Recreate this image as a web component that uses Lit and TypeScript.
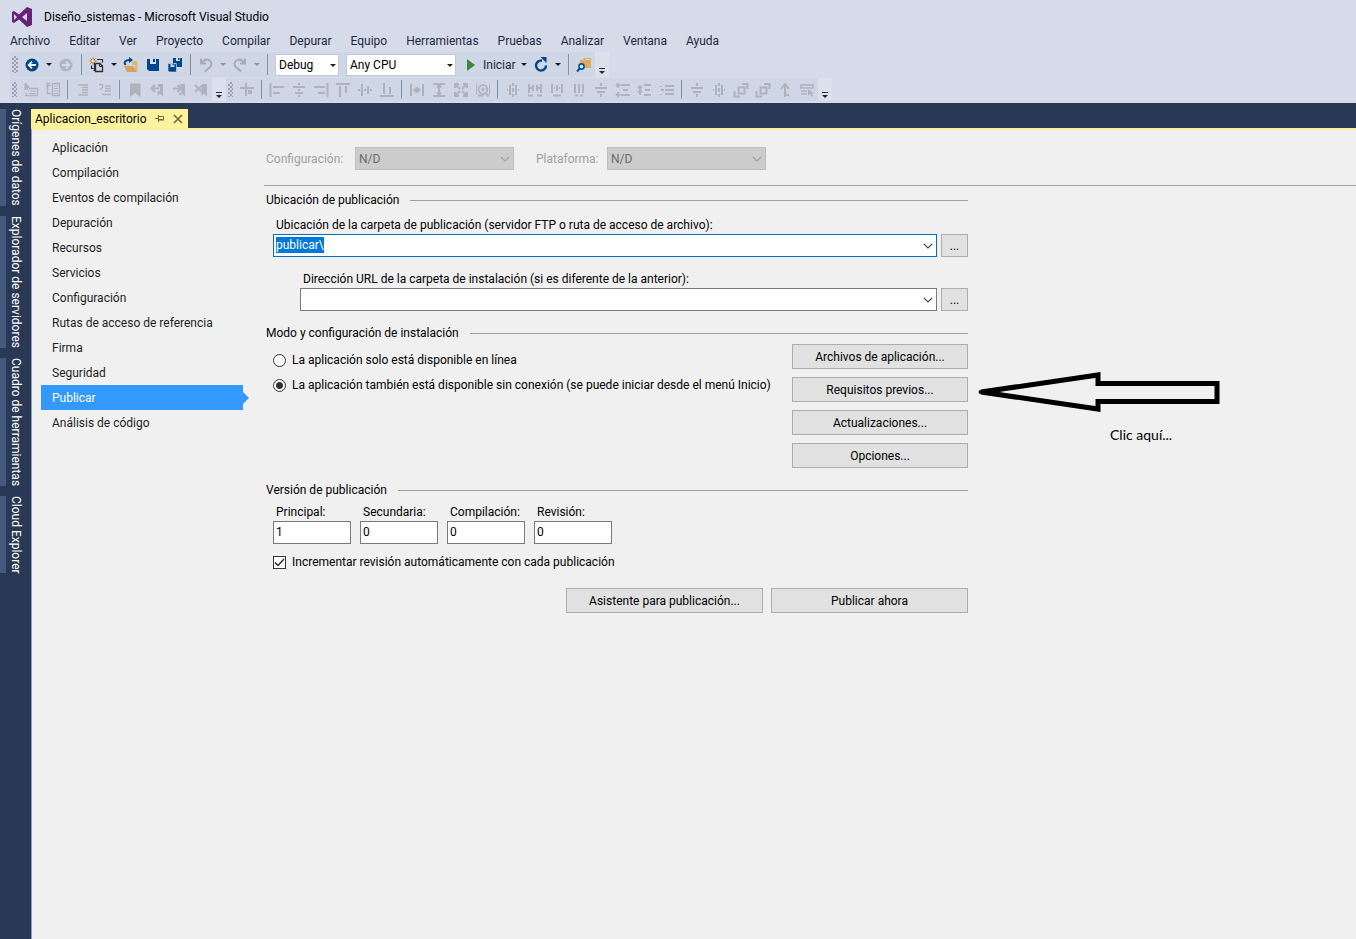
import { LitElement, html, css, svg, nothing } from "lit";
import { customElement, property, query } from "lit/decorators.js";
import { classMap } from "lit/directives/class-map.js";

const G = "#aeb2bc";

const align = (d: string) => svg`<path d=${d} fill="none" stroke=${G} stroke-width="2"/>`;

const glyphs: Record<string, unknown> = {
  back: svg`<circle cx="8" cy="8" r="6.5" fill="#00468b"/><path d="M12 8H5M8 4.6 4.8 8 8 11.400" fill="none" stroke="#fff" stroke-width="1.8"/>`,
  forward: svg`<circle cx="8" cy="8" r="6.500" fill="#b1b5bf"/><path d="M4 8h7M8 4.600 11.200 8 8 11.400" fill="none" stroke="#d6dbe9" stroke-width="1.800"/>`,
  newItem: svg`<path d="M8 2.500h5.500v3M2.500 8.500v3h2M4.500 13.500h2M5.500 13V6.500h3" fill="none" stroke="#2d2d30" stroke-width="1.200"/><path d="M6.500 6.500h4.500l2.500 2.500v5.500h-7z" fill="#cfd6e5" stroke="#2d2d30" stroke-width="1.300"/><path d="M10.500 6.500V9.500h3" fill="none" stroke="#2d2d30"/><path d="M4 .5v7M.5 4h7M1.500 1.500l5 5M6.500 1.500l-5 5" stroke="#b8762c" stroke-width="1"/><circle cx="4" cy="4" r="1.100" fill="#fff"/>`,
  open: svg`<path d="M9 4h5.500v11H12V8H9z" fill="#dcb67a"/><path d="M1 9h9.500l3 6H4z" fill="#d7a557"/><path d="M2.500 8c-2-3 0-5 4-5" fill="none" stroke="#00468b" stroke-width="2"/><path d="M6 0l4 3-4 3z" fill="#00468b"/>`,
  save: svg`<path d="M2 2h12v12H4l-2-2z" fill="#00468b"/><path d="M5 2h6v5H5z" fill="#d6dbe9"/><path d="M8 2h2v3H8z" fill="#00468b"/><path d="M5 11h5v3H5z" fill="#00468b"/>`,
  saveAll: svg`<path d="M6 1h9v9H9V6H6z" fill="#00468b"/><path d="M9 1h4v3H9z" fill="#d6dbe9"/><path d="M11 1h1.500v2H11z" fill="#00468b"/><path d="M1 6.500h8.500V15H2.500L1 13.500z" fill="#00468b" stroke="#d6dbe9" stroke-width=".6"/><path d="M3.500 6.500h4V10h-4z" fill="#d6dbe9"/><path d="M5.500 6.500h1.300v2H5.500z" fill="#00468b"/>`,
  undo: svg`<path d="M3 1.500v5h5" fill="none" stroke="#a7abb6" stroke-width="2"/><path d="M3.500 6C6 2.500 9 2 11.500 3.500s2.500 4.500.5 6.500L7 14.500" fill="none" stroke="#a7abb6" stroke-width="2"/>`,
  redo: svg`<path d="M13 1.500v5H8" fill="none" stroke="#a7abb6" stroke-width="2"/><path d="M12.500 6C10 2.500 7 2 4.500 3.500S2 8 4 10l5 4.500" fill="none" stroke="#a7abb6" stroke-width="2"/>`,
  play: svg`<path d="M3 2l8 6-8 6z" fill="#388a34"/>`,
  restart: svg`<path d="M9 3.700A5 5 0 1 0 13 8.500" fill="none" stroke="#00468b" stroke-width="2.400"/><path d="M7.500 0h6v6z" fill="#00468b"/>`,
  find: svg`<path d="M4 3h3l1-2h7v10H8L4 8z" fill="#d9ab63"/><path d="M9 2.500h5" stroke="#e9cfa2"/><circle cx="5.500" cy="9.500" r="2.600" fill="#e6ecf7" stroke="#00539c" stroke-width="1.600"/><path d="M3.700 11.500 1 14.500" stroke="#00539c" stroke-width="2"/>`,
  pointerBox: svg`<path d="M2 1v7l2-2 1.500 3M2 1l4.500 4.500H4" fill=${G} stroke=${G}/><path d="M6 6.500h8.500v7H3v-3" fill="none" stroke=${G} stroke-width="1.300"/><path d="M7 9h6M6 11.500h7" stroke=${G}/>`,
  tree: svg`<path d="M7.500 1.500h7v12h-7zM1 3.500h5M2.500 3.500v8h4M1 1.500h4" fill="none" stroke=${G} stroke-width="1.300"/><path d="M9 4h4M9 6.500h4M9 9h4M9 11.500h4" stroke=${G}/>`,
  indent: svg`<path d="M3 3h10M7 5.500h6M7 8h6M7 10.500h6M3 13h10" stroke=${G} stroke-width="1.300"/>`,
  outdent: svg`<path d="M2 2.500h3.500v3L3 7.500M8 4h6M8 6.500h6M8 9h6M5 12.500h9" fill="none" stroke=${G} stroke-width="1.300"/>`,
  bookmark: svg`<path d="M3 1.500h10.500V15L8.200 11 3 15z" fill=${G}/>`,
  bookPrev: svg`<path d="M9 2h5v12.500L11 11.500 8.500 14V9H11V5H9z" fill=${G}/><path d="M10 6.500H3M6 3 2.500 6.500 6 10" fill="none" stroke=${G} stroke-width="2"/>`,
  bookNext: svg`<path d="M9 2h5v12.500L11 11.500 8.500 14v-3.500H11z" fill=${G}/><path d="M2 6.500h8M6.500 3l3.500 3.500L6.500 10" fill="none" stroke=${G} stroke-width="2"/>`,
  bookClear: svg`<path d="M9 2h5v12.500L11 11.500 8.500 14V9z" fill=${G}/><path d="M2 3l8 8M10 3 2 10" stroke=${G} stroke-width="2"/>`,
  grid: svg`<path d="M7 1v13M1 6h14" stroke=${G} stroke-width="2" fill="none"/><path d="M9 8h4v4H9z" fill=${G}/>`,
  left: align("M1.500 1v14M4 5h11M4 11h7"),
  center: align("M8 1v2M8 7v2M8 13v2M2 5h12M4 11h8"),
  right: align("M14.500 1v14M1 5h11M5 11h7"),
  top: align("M1 2h14M5 4v11M11 4v7"),
  middle: align("M5 2v12M11 4v8M1 8h2M7 8h2M13 8h2"),
  bottom: align("M1 14h14M5 1v11M11 5v7"),
  sameW: align("M2 2v12M14 2v12M4.500 8h7M8 5v6M6 6l4 4M10 6l-4 4"),
  sameH: align("M2 2h12M2 14h12M8 3v10M6 5.500 8 3.500l2 2M6 10.500l2 2 2-2"),
  sameS: align("M2 6V2h4M10 2h4v4M14 10v4h-4M6 14H2v-4M3 3l4 4M13 3 9 7M13 13 9 9M3 13l4-4"),
  sizeGrid: svg`<path d="M1.500 2v11M14.500 2v11" stroke=${G}/><circle cx="8" cy="7.500" r="4.300" fill="none" stroke=${G} stroke-width="1.800"/><path d="M6 7.500h4M8 5.500v4" stroke=${G} stroke-width="1.300"/><path d="M10.500 10.500l3 4M3 13.500h6" stroke=${G} stroke-width="2"/>`,
  hEq: align("M5 3v10M11 3v10M8 1v3M8 6v4M8 12v3M2 8h1M13 8h1"),
  hInc: align("M2 2v9M6 3v6M10 3v6M14 2v9M3 6h2M11 6h2M1 13.500h5M10 13.500h5"),
  hDec: align("M3 2v9M8 3v6M13 2v9M5 6h1M10 6h1M4 13.500h8"),
  hNone: align("M4 2v9M8 2v9M12 2v9M4 13.500h3M9 13.500h3"),
  vEq: align("M2 6h12M4 10h8M8 1v3M8 12v3"),
  vInc: align("M6 3h9M8 8h5M6 13h9M3 2v4M3 10v4M1 4l2-2 2 2M1 12l2 2 2-2"),
  vDec: align("M7 3h7M8 8h5M7 13h7M3 3v10M1 5l2 1 2-1M1 10l2-1 2 1"),
  vNone: align("M6 4h9M6 8h9M6 12h9M2 4v1M2 8h3M2 12v1"),
  front: svg`<path d="M5.500 5.500h6v6h-6z" fill="none" stroke=${G} stroke-width="2"/><path d="M9 2h5.500v5M1.500 9v5.500H7" fill="none" stroke=${G} stroke-width="2"/>`,
  tab: svg`<path d="M8 15V3M4 7l4-5 4 5M8 13h4" fill="none" stroke=${G} stroke-width="2"/>`,
  merge: svg`<path d="M2 3h12v3H2zM2 9h6M2 12h6" fill="none" stroke=${G} stroke-width="1.600"/><path d="M9 7v7l2-2 2 3 1-1-1.500-2.500H15z" fill=${G}/>`,
};

const icon = (name: string) =>
  html`<svg class="glyph" viewBox="0 0 16 16" width="16" height="16" aria-hidden="true">${glyphs[name]}</svg>`;

const caret = html`<svg class="glyph" viewBox="0 0 6 3" width="6" height="3" aria-hidden="true"><path d="M0 0h6L3 3z" fill="currentColor"/></svg>`;

const chevron = html`<svg class="glyph" viewBox="0 0 10 6" width="10" height="6" aria-hidden="true"><path d="M.8.8 5 5 9.200.8" fill="none" stroke="currentColor" stroke-width="1.200"/></svg>`;

const shared = css`
  * { box-sizing: border-box; }
  button, input, select { font: inherit; color: inherit; margin: 0; border-radius: 0; }
  .glyph { display: block; flex: none; }
`;

@customElement("vs-toolbars")
class VsToolbars extends LitElement {
  static styles = [shared, css`
    :host { display: block; color: #1e1e1e; }
    .bar { display: flex; margin: 0 0 1px 10px; width: fit-content; background: #cfd6e5; }
    .standard { height: 25px; }
    .layout { height: 23px; }
    .grip { width: 10px; background: conic-gradient(#98a0b2 25%, transparent 0 50%, #98a0b2 0 75%, transparent 0) 0 0 / 4px 4px; background: radial-gradient(circle at 1px 1px, #98a0b2 1px, transparent 1px) 0 0 / 4px 4px, radial-gradient(circle at 3px 3px, #98a0b2 1px, transparent 1px) 0 0 / 4px 4px; background-clip: content-box; padding: 4px 3px 4px 2px; }
    .standard .grip { width: 11px; }
    .tool { width: 22px; padding: 0; border: 0; background: none; display: flex; align-items: center; justify-content: center; }
    .drop { width: 12px; }
    .off { color: #8d93a0; }
    .rule { width: 1px; margin: 2px 4px 2px 3px; background: #8591a8; }
    .standard .rule { margin: 2px 4px; }
    .pick { position: relative; display: flex; align-items: center; margin: 2px 4px 1px 3px; }
    .pick select { width: 100%; height: 100%; padding: 0 3px; appearance: none; border: 1px solid #c2c9da; background: #fff; color: #000; }
    .pick .glyph { position: absolute; right: 3px; pointer-events: none; }
    .mode { width: 64px; }
    .cpu { width: 110px; }
    .run { display: flex; align-items: center; gap: 3px; padding: 0 2px 0 4px; border: 0; background: none; color: #1b293e; }
    .more { width: 14px; padding: 0 0 3px; border: 0; background: #dce0ec; display: flex; align-items: flex-end; justify-content: center; }
  `];

  private tool(name: string, label: string) {
    return html`<button class="tool" aria-label=${label}>${icon(name)}</button>`;
  }
  private drop(off = false) {
    return html`<button class=${classMap({ tool: true, drop: true, off })} aria-label="Más">${caret}</button>`;
  }
  private more() {
    return html`<button class="more" aria-label="Opciones de barra"><svg class="glyph" viewBox="0 0 6 6" width="6" height="6"><path d="M0 0h6v1H0zM0 3h6L3 6z" fill="#1b293e"/></svg></button>`;
  }

  render() {
    const groups = [
      ["left", "center", "right", "top", "middle", "bottom"],
      ["sameW", "sameH", "sameS", "sizeGrid"],
      ["hEq", "hInc", "hDec", "hNone", "vEq", "vInc", "vDec", "vNone"],
      ["vEq", "hEq", "front", "front", "tab", "merge"],
    ];
    const text = [["pointerBox", "tree"], ["indent", "outdent"], ["bookmark", "bookPrev", "bookNext", "bookClear"]];
    const rule = html`<span class="rule"></span>`;
    return html`
      <div class="bar standard">
        <span class="grip"></span>
        ${this.tool("back", "Atrás")}${this.drop()}${this.tool("forward", "Adelante")}
        ${rule}
        ${this.tool("newItem", "Nuevo")}${this.drop()}${this.tool("open", "Abrir")}${this.tool("save", "Guardar")}${this.tool("saveAll", "Guardar todo")}
        ${rule}
        ${this.tool("undo", "Deshacer")}${this.drop(true)}${this.tool("redo", "Rehacer")}${this.drop(true)}
        ${rule}
        <span class="pick mode"><select aria-label="Configuración"><option>Debug</option></select>${caret}</span>
        <span class="pick cpu"><select aria-label="Plataforma"><option>Any CPU</option></select>${caret}</span>
        <button class="run">${icon("play")}Iniciar</button>${this.drop()}
        ${this.tool("restart", "Actualizar")}${this.drop()}
        ${rule}
        ${this.tool("find", "Buscar")}
        ${this.more()}
      </div>
      <div class="bar layout">
        <span class="grip"></span>
        ${text.map((g, i) => html`${i ? rule : nothing}${g.map((n) => this.tool(n, n))}`)}
        ${this.more()}
        <span class="grip"></span>
        ${this.tool("grid", "grid")}
        ${groups.map((g) => html`${rule}${g.map((n) => this.tool(n, n))}`)}
        ${this.more()}
      </div>
    `;
  }
}

@customElement("publish-page")
class PublishPage extends LitElement {
  @query(".path") path!: HTMLInputElement;

  static styles = [shared, css`
    :host { display: block; color: #000; line-height: 16px; }
    .scope { display: flex; align-items: center; padding: 17px 0 15px 2px; color: #a0a0a0; border-bottom: 1px solid #a0a0a0; }
    .scope label { flex: none; width: 89px; }
    .scope label.plat { width: 71px; margin-left: 22px; }
    .box { position: relative; display: flex; align-items: center; width: 159px; height: 23px; }
    .box select { width: 100%; height: 100%; padding: 0 3px; appearance: none; border: 1px solid #bfbfbf; background: #ccc; color: #6d6d6d; opacity: 1; }
    .box .glyph { position: absolute; right: 4px; color: #a0a0a0; pointer-events: none; }
    .split { display: flex; align-items: flex-start; }
    .form { flex: 0 1 704px; padding: 6px 0 0 2px; box-sizing: border-box; }
    h2 { display: flex; align-items: center; gap: 11px; margin: 0; font: inherit; }
    h2::after { content: ""; flex: 1; height: 1px; background: #a0a0a0; }
    h2.next { margin-top: 14px; }
    .field { margin: 9px 0 0 7px; }
    .field.inner { margin: 14px 0 0 34px; }
    .field label, .part label { display: block; padding-left: 3px; margin-bottom: 1px; }
    .line { display: flex; gap: 4px; }
    .combo { flex: 1; display: flex; height: 23px; border: 1px solid #7a7a7a; background: #fff; }
    .combo.active { border-color: #0a6cbd; }
    .combo input { flex: 1; min-width: 0; padding: 0 2px; margin: 2px 0; height: 16px; line-height: 16px; border: 0; outline: 0; background: none; }
    .combo input::selection { background: #0078d7; color: #fff; }
    .combo button { width: 16px; padding: 0; border: 0; background: none; color: #444; display: flex; align-items: center; justify-content: center; }
    .push { height: 25px; padding: 0; border: 1px solid #adadad; background: #e1e1e1; text-align: center; }
    .dots { width: 27px; height: 23px; }
    .modes { display: flex; justify-content: space-between; margin: 3px 0 0 7px; }
    .radios { display: flex; flex-direction: column; gap: 9px; padding-top: 8px; }
    .check { display: flex; align-items: center; gap: 6px; white-space: nowrap; }
    .check input { appearance: none; flex: none; width: 13px; height: 13px; border: 1px solid #333; background: #fff; display: grid; place-items: center; }
    .check input[type="radio"] { border-radius: 50%; }
    .check input[type="radio"]:checked { background: radial-gradient(circle, #333 3px, #fff 4px); }
    .tick { position: relative; display: flex; }
    .tick .glyph { position: absolute; left: 1px; top: 1px; pointer-events: none; }
    .stack { display: flex; flex-direction: column; gap: 8px; width: 176px; }
    .parts { display: flex; gap: 9px; margin: 6px 0 10px 7px; }
    .part { width: 78px; }
    .part input { width: 100%; height: 23px; padding: 0 2px 2px; border: 1px solid #7a7a7a; background: #fff; display: block; }
    .auto { margin-left: 7px; }
    .ends { display: flex; justify-content: flex-end; gap: 8px; margin-top: 18px; }
    .ends .push { width: 197px; }
    .note { margin: 185px 0 0 9px; }
    .note svg { display: block; }
    .note p { margin: 14px 0 0 133px; font-family: Lato, sans-serif; font-size: 14px; }
  `];

  firstUpdated() {
    this.path.focus();
    this.path.select();
  }

  render() {
    const actions = ["Archivos de aplicación...", "Requisitos previos...", "Actualizaciones...", "Opciones..."];
    const parts = [["Principal:", "1"], ["Secundaria:", "0"], ["Compilación:", "0"], ["Revisión:", "0"]];
    return html`
      <div class="scope">
        <label for="conf">Configuración:</label>
        <span class="box"><select id="conf" disabled><option>N/D</option></select>${chevron}</span>
        <label class="plat" for="plat">Plataforma:</label>
        <span class="box"><select id="plat" disabled><option>N/D</option></select>${chevron}</span>
      </div>
      <div class="split">
        <div class="form">
          <h2>Ubicación de publicación</h2>
          <div class="field">
            <label for="path">Ubicación de la carpeta de publicación (servidor FTP o ruta de acceso de archivo):</label>
            <div class="line">
              <span class="combo active"><input id="path" class="path" .value=${"publicar\\"} spellcheck="false"><button aria-label="Abrir lista">${chevron}</button></span>
              <button class="push dots">...</button>
            </div>
          </div>
          <div class="field inner">
            <label for="url">Dirección URL de la carpeta de instalación (si es diferente de la anterior):</label>
            <div class="line">
              <span class="combo"><input id="url"><button aria-label="Abrir lista">${chevron}</button></span>
              <button class="push dots">...</button>
            </div>
          </div>
          <h2 class="next">Modo y configuración de instalación</h2>
          <div class="modes">
            <div class="radios">
              <label class="check"><input type="radio" name="mode">La aplicación solo está disponible en línea</label>
              <label class="check"><input type="radio" name="mode" checked>La aplicación también está disponible sin conexión (se puede iniciar desde el menú Inicio)</label>
            </div>
            <div class="stack">${actions.map((a) => html`<button class="push">${a}</button>`)}</div>
          </div>
          <h2 class="next">Versión de publicación</h2>
          <div class="parts">
            ${parts.map(([name, value], i) => html`<div class="part"><label for="part${i}">${name}</label><input id="part${i}" .value=${value}></div>`)}
          </div>
          <label class="check auto">
            <span class="tick"><input type="checkbox" checked><svg class="glyph" viewBox="0 0 11 11" width="11" height="11"><path d="M1 5.500 4 8.500 10 2" fill="none" stroke="#222" stroke-width="1.300"/></svg></span>
            Incrementar revisión automáticamente con cada publicación
          </label>
          <div class="ends">
            <button class="push">Asistente para publicación...</button>
            <button class="push">Publicar ahora</button>
          </div>
        </div>
        <aside class="note">
          <svg viewBox="0 0 244 42" width="244" height="42" aria-hidden="true"><path d="M4 21 121 4v8.500h119v18H121V38z" fill="none" stroke="#000" stroke-width="5"/><path d="M2 21 22 18.500v5z" stroke="#000" stroke-width="3"/></svg>
          <p>Clic aquí...</p>
        </aside>
      </div>
    `;
  }
}

@customElement("app-root")
class AppRoot extends LitElement {
  @property() current = "Publicar";

  static styles = [shared, css`
    :host { display: flex; flex-direction: column; min-height: 100vh; background: #d6dbe9; font: 12px/16px Roboto, "Noto Sans", sans-serif; color: #000; }
    .title { display: flex; align-items: center; gap: 11px; height: 33px; padding-left: 11px; }
    .menu { display: flex; gap: 19px; height: 19px; padding-left: 10px; white-space: nowrap; }
    .menu a { color: #1b293e; text-decoration: none; line-height: 16px; }
    .body { flex: 1; display: flex; background: #293955; margin-top: 1px; }
    .rail { display: flex; flex-direction: column; gap: 10px; width: 31px; padding-top: 6px; }
    .rail button { writing-mode: vertical-rl; width: 26px; padding: 0; border: 0; border-left: 6px solid #465a7d; background: none; color: #fff; text-align: left; line-height: 16px; white-space: nowrap; }
    .doc { flex: 1; min-width: 0; display: flex; flex-direction: column; padding-top: 6px; }
    .tab { display: flex; align-items: center; width: 157px; height: 19px; padding: 0 5px 0 4px; background: #fff29d; justify-content: space-between; }
    .marks { display: flex; align-items: center; gap: 9px; }
    .marks button { border: 0; padding: 0; background: none; }
    .page { flex: 1; display: flex; background: #f0f0f0; border-top: 2px solid #fff29d; border-left: 1px solid #8e9bbc; }
    .nav { flex: none; width: 202px; margin: 5px 0 0 9px; }
    .nav a { position: relative; display: block; padding: 5px 0 4px 11px; color: #1e1e1e; text-decoration: none; }
    .nav a.on { background: #39f; color: #fff; }
    .nav a.on::after { content: ""; position: absolute; left: 100%; top: 7px; border: 6px solid transparent; border-right: 0; border-left-color: #39f; }
    publish-page { flex: 1; min-width: 0; margin-left: 21px; }
  `];

  render() {
    const menu = ["Archivo", "Editar", "Ver", "Proyecto", "Compilar", "Depurar", "Equipo", "Herramientas", "Pruebas", "Analizar", "Ventana", "Ayuda"];
    const rail = ["Orígenes de datos", "Explorador de servidores", "Cuadro de herramientas", "Cloud Explorer"];
    const pages = ["Aplicación", "Compilación", "Eventos de compilación", "Depuración", "Recursos", "Servicios", "Configuración", "Rutas de acceso de referencia", "Firma", "Seguridad", "Publicar", "Análisis de código"];
    return html`
      <header>
        <div class="title">
          <svg class="glyph" viewBox="0 0 22 20" width="22" height="20" aria-hidden="true"><path fill-rule="evenodd" d="M16 0l5 2v16l-5 2-8-7.500L3 16l-2-1V5l2-1 5 3.500zM16 6l-5 4 5 4zM3 7v6l3-3z" fill="#68217a"/></svg>
          <span>Diseño_sistemas - Microsoft Visual Studio</span>
        </div>
        <nav class="menu">${menu.map((m) => html`<a href="#">${m}</a>`)}</nav>
        <vs-toolbars></vs-toolbars>
      </header>
      <div class="body">
        <div class="rail">${rail.map((r) => html`<button>${r}</button>`)}</div>
        <main class="doc">
          <div class="tab">
            <span>Aplicacion_escritorio</span>
            <span class="marks">
              <button aria-label="Anclar"><svg class="glyph" viewBox="0 0 9 7" width="9" height="7"><path d="M0 3.500h3M3.500 0v7M4 1.500h4.500v3H4M4 5h5" fill="none" stroke="#75633d"/></svg></button>
              <button aria-label="Cerrar"><svg class="glyph" viewBox="0 0 10 10" width="10" height="10"><path d="M1 1l8 8M9 1 1 9" stroke="#75633d" stroke-width="1.600"/></svg></button>
            </span>
          </div>
          <div class="page">
            <nav class="nav">${pages.map((p) => html`<a href="#" class=${classMap({ on: p === this.current })}>${p}</a>`)}</nav>
            <publish-page></publish-page>
          </div>
        </main>
      </div>
    `;
  }
}
